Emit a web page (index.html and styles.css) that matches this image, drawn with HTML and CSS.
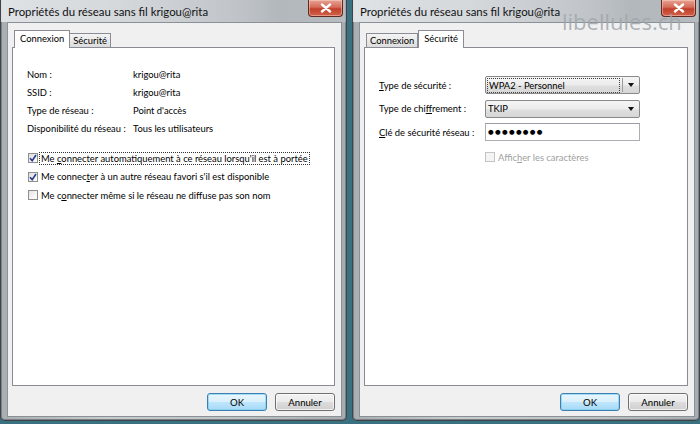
FILE: index.html
```html
<!DOCTYPE html>
<html lang="fr">
<head>
<meta charset="utf-8">
<title>Propriétés du réseau sans fil</title>
<link rel="stylesheet" href="styles.css">
</head>
<body>
<div class="window">
  <div class="titlebar">
    <span class="title">Propriétés du réseau sans fil krigou@rita</span>
    <span class="close"><svg width="12" height="10" viewBox="0 0 12 10"><path d="M2 1.5 L10 8.5 M10 1.5 L2 8.5" stroke="#fff" stroke-width="2.4" stroke-linecap="round"/></svg></span>
  </div>
  <div class="client">
    <div class="tabs">
      <span class="tab active tab-first">Connexion</span>
      <span class="tab">Sécurité</span>
    </div>
    <div class="panel panel-conn">
      <div class="info">
        <span class="lbl">Nom :</span><span>krigou@rita</span>
        <span class="lbl">SSID :</span><span>krigou@rita</span>
        <span class="lbl">Type de réseau :</span><span>Point d'accès</span>
        <span class="lbl">Disponibilité du réseau :</span><span>Tous les utilisateurs</span>
      </div>
      <div class="checks">
        <div class="check"><span class="box checked"><svg width="8" height="8" viewBox="0 0 8 8"><path d="M1 4.2 L3.2 6.6 L7 1" fill="none" stroke="#2a3a8c" stroke-width="1.6"/></svg></span><span class="focus">Me <u>c</u>onnecter automatiquement à ce réseau lorsqu'il est à portée</span></div>
        <div class="check"><span class="box checked"><svg width="8" height="8" viewBox="0 0 8 8"><path d="M1 4.2 L3.2 6.6 L7 1" fill="none" stroke="#2a3a8c" stroke-width="1.6"/></svg></span><span class="ctext">Me connec<u>t</u>er à un autre réseau favori s'il est disponible</span></div>
        <div class="check"><span class="box"></span><span class="ctext">Me c<u>o</u>nnecter même si le réseau ne diffuse pas son nom</span></div>
      </div>
    </div>
    <div class="footer">
      <span class="btn default">OK</span>
      <span class="btn">Annuler</span>
    </div>
  </div>
</div>

<div class="window">
  <div class="titlebar">
    <span class="title">Propriétés du réseau sans fil krigou@rita</span>
    <span class="close"><svg width="12" height="10" viewBox="0 0 12 10"><path d="M2 1.5 L10 8.5 M10 1.5 L2 8.5" stroke="#fff" stroke-width="2.4" stroke-linecap="round"/></svg></span>
    <span class="watermark">libellules.ch</span>
  </div>
  <div class="client">
    <div class="tabs">
      <span class="tab tab-first">Connexion</span>
      <span class="tab active">Sécurité</span>
    </div>
    <div class="panel panel-sec">
      <div class="form">
        <span class="flbl"><u>T</u>ype de sécurité :</span>
        <span class="combo focused"><span class="val"><span class="dots">WPA2 - Personnel</span></span><span class="arrow"></span></span>
        <span class="flbl">Type de chi<u>f</u>frement :</span>
        <span class="combo"><span class="val">TKIP</span><span class="arrow"></span></span>
        <span class="flbl"><u>C</u>lé de sécurité réseau :</span>
        <span class="input">●●●●●●●●</span>
        <span></span>
        <div class="check disabled"><span class="box"></span><span class="ctext">Affic<u>h</u>er les caractères</span></div>
      </div>
    </div>
    <div class="footer">
      <span class="btn default">OK</span>
      <span class="btn">Annuler</span>
    </div>
  </div>
</div>
</body>
</html>
```

FILE: styles.css
```css
html, body {
  margin: 0;
  padding: 0;
}
body {
  width: 700px;
  height: 424px;
  overflow: hidden;
  background: #3a7180;
  display: flex;
  gap: 5px;
  align-items: flex-start;
  font-family: Lato, "Liberation Sans", sans-serif;
  font-size: 9.4px;
  color: #000;
}
.window {
  position: relative;
  width: 347px;
  height: 421px;
  box-sizing: border-box;
  border: 1px solid #404448;
  border-top: none;
  border-radius: 0 0 5px 5px;
  background: linear-gradient(90deg, #a9aeb3 0%, #c6cacd 30%, #bfc3c7 70%, #a7acb1 100%);
  box-shadow: inset 1px 0 0 #7c8186, inset -1px 0 0 #7c8186, inset 0 -1px 0 #7c8186;
  padding: 0 4px 3px 6px;
  display: flex;
  flex-direction: column;
}
.window + .window {
  width: 348px;
}
.titlebar {
  position: relative;
  flex-shrink: 0;
  height: 22px;
  display: flex;
  align-items: center;
  background: linear-gradient(90deg, rgba(230,233,236,0.9) 0%, rgba(214,218,222,0.6) 45%, rgba(170,176,182,0.3) 80%, rgba(200,204,208,0.5) 100%);
  margin: 0 -4px 0 -6px;
  padding-left: 7px;
}
.title {
  font-family: Lato, "Liberation Sans", sans-serif;
  font-size: 11.4px;
  color: #111;
}
.close {
  margin-left: auto;
  margin-right: 3px;
  align-self: flex-start;
  width: 35px;
  height: 17px;
  box-sizing: border-box;
  border: 1px solid #5e2a22;
  border-top: none;
  border-radius: 0 0 4px 4px;
  background: linear-gradient(180deg, #e7a394 0%, #d66b58 45%, #c1402c 55%, #d2614a 100%);
  box-shadow: inset 0 0 0 1px rgba(255,220,210,0.45);
  display: flex;
  align-items: center;
  justify-content: center;
  position: relative;
  z-index: 1;
}
.watermark {
  position: absolute;
  left: 209px;
  top: 9px;
  line-height: 24px;
  font-family: "Open Sans", "Liberation Sans", sans-serif;
  font-size: 22px;
  color: rgba(160,166,172,0.85);
  pointer-events: none;
  z-index: 5;
}
.client {
  flex: 1;
  min-height: 0;
  background: #f0f0f0;
  border: 1px solid #8b9096;
  padding: 7px 6px 0 4px;
  display: flex;
  flex-direction: column;
}
.tabs {
  display: flex;
  align-items: flex-end;
  flex-shrink: 0;
  height: 17px;
  padding-left: 2px;
  position: relative;
  z-index: 2;
}
.tab {
  height: 13px;
  line-height: 13px;
  padding: 0 3px;
  border: 1px solid #898c95;
  border-bottom: none;
  border-left: none;
  background: linear-gradient(180deg, #f4f4f4 0%, #e9e9e9 50%, #dcdcdc 100%);
  font-size: 9.4px;
}
.tab-first {
  border-left: 1px solid #898c95;
}
.tab.active {
  height: 17px;
  line-height: 16px;
  background: #fff;
  padding: 0 5px;
  border-left: 1px solid #898c95;
  margin-bottom: -1px;
}
.tab.active + .tab {
  border-left: none;
}
.panel {
  height: 339px;
  flex-shrink: 0;
  box-sizing: border-box;
  background: #fff;
  border: 1px solid #898c95;
  position: relative;
  z-index: 1;
}
.panel-conn {
  padding: 17px 0 0 14px;
}
.info {
  display: grid;
  grid-template-columns: 106px auto;
  grid-auto-rows: 18px;
  align-items: center;
  white-space: nowrap;
}
.checks {
  margin-top: 12px;
  display: flex;
  flex-direction: column;
}
.check {
  height: 18.5px;
  display: flex;
  align-items: center;
  gap: 2px;
  white-space: nowrap;
}
.box {
  width: 10px;
  height: 10px;
  flex-shrink: 0;
  box-sizing: border-box;
  border: 1px solid #8f8f8f;
  background: linear-gradient(135deg, #e2e2e2 0%, #f6f6f6 60%, #fff 100%);
  display: flex;
  align-items: center;
  justify-content: center;
  margin-left: 1px;
}
.box.checked {
  background: linear-gradient(135deg, #dcdcdc 0%, #f4f4f4 70%, #fff 100%);
}
.focus {
  outline: 1px dotted #333;
  outline-offset: 0;
  padding: 0 1px;
}
.ctext {
  padding: 0 1px;
}
.footer {
  display: flex;
  justify-content: flex-end;
  flex-shrink: 0;
  gap: 8px;
  padding: 7px 0 0 0;
}
.btn {
  width: 60px;
  height: 18px;
  box-sizing: border-box;
  border: 1px solid #707070;
  border-radius: 3px;
  background: linear-gradient(180deg, #f3f3f3 0%, #ebebeb 48%, #dcdcdc 52%, #d0d0d0 100%);
  box-shadow: inset 0 0 0 1px rgba(255,255,255,0.7);
  display: flex;
  align-items: center;
  justify-content: center;
  font-size: 9.6px;
}
.btn.default {
  border-color: #3c7fb1;
  background: linear-gradient(180deg, #eaf6fd 0%, #d9f0fc 48%, #bee6fd 52%, #a7d9f5 100%);
  box-shadow: inset 0 0 0 1px rgba(120,200,240,0.6);
}
.panel-sec {
  padding: 28px 0 0 14px;
}
.form {
  display: grid;
  grid-template-columns: 106px 155px;
  grid-auto-rows: 18px;
  row-gap: 5.5px;
  align-items: center;
}
.flbl {
  white-space: nowrap;
}
.combo {
  height: 18px;
  box-sizing: border-box;
  border: 1px solid #8a8a8a;
  border-radius: 2px;
  background: linear-gradient(180deg, #f5f5f5 0%, #ececec 50%, #dfdfdf 55%, #d6d6d6 100%);
  display: flex;
  align-items: center;
}
.combo .val {
  flex: 1;
  padding: 0 2px;
  display: flex;
  align-items: center;
  height: 14px;
  white-space: nowrap;
}
.combo.focused .val {
  border-right: 1px solid #9a9a9a;
}
.dots {
  flex: 1;
  outline: 1px dotted #444;
  padding: 0 1px;
  line-height: 13px;
  margin-right: 1px;
}
.arrow {
  width: 16px;
  height: 100%;
  position: relative;
}
.arrow::after {
  content: "";
  position: absolute;
  left: 5px;
  top: 6px;
  border-left: 3.5px solid transparent;
  border-right: 3.5px solid transparent;
  border-top: 4px solid #111;
}
.input {
  height: 18px;
  box-sizing: border-box;
  border: 1px solid #abadb3;
  border-top-color: #9a9da3;
  background: #fff;
  display: flex;
  align-items: center;
  padding-left: 2px;
  font-family: "DejaVu Sans", sans-serif;
  font-size: 6.5px;
  letter-spacing: 1.3px;
}
.check.disabled {
  height: 18px;
  margin-top: 3px;
  color: #a0a0a0;
}
.check.disabled .box {
  border-color: #c4c4c4;
  background: #f4f4f4;
  margin-left: 0;
}
```
